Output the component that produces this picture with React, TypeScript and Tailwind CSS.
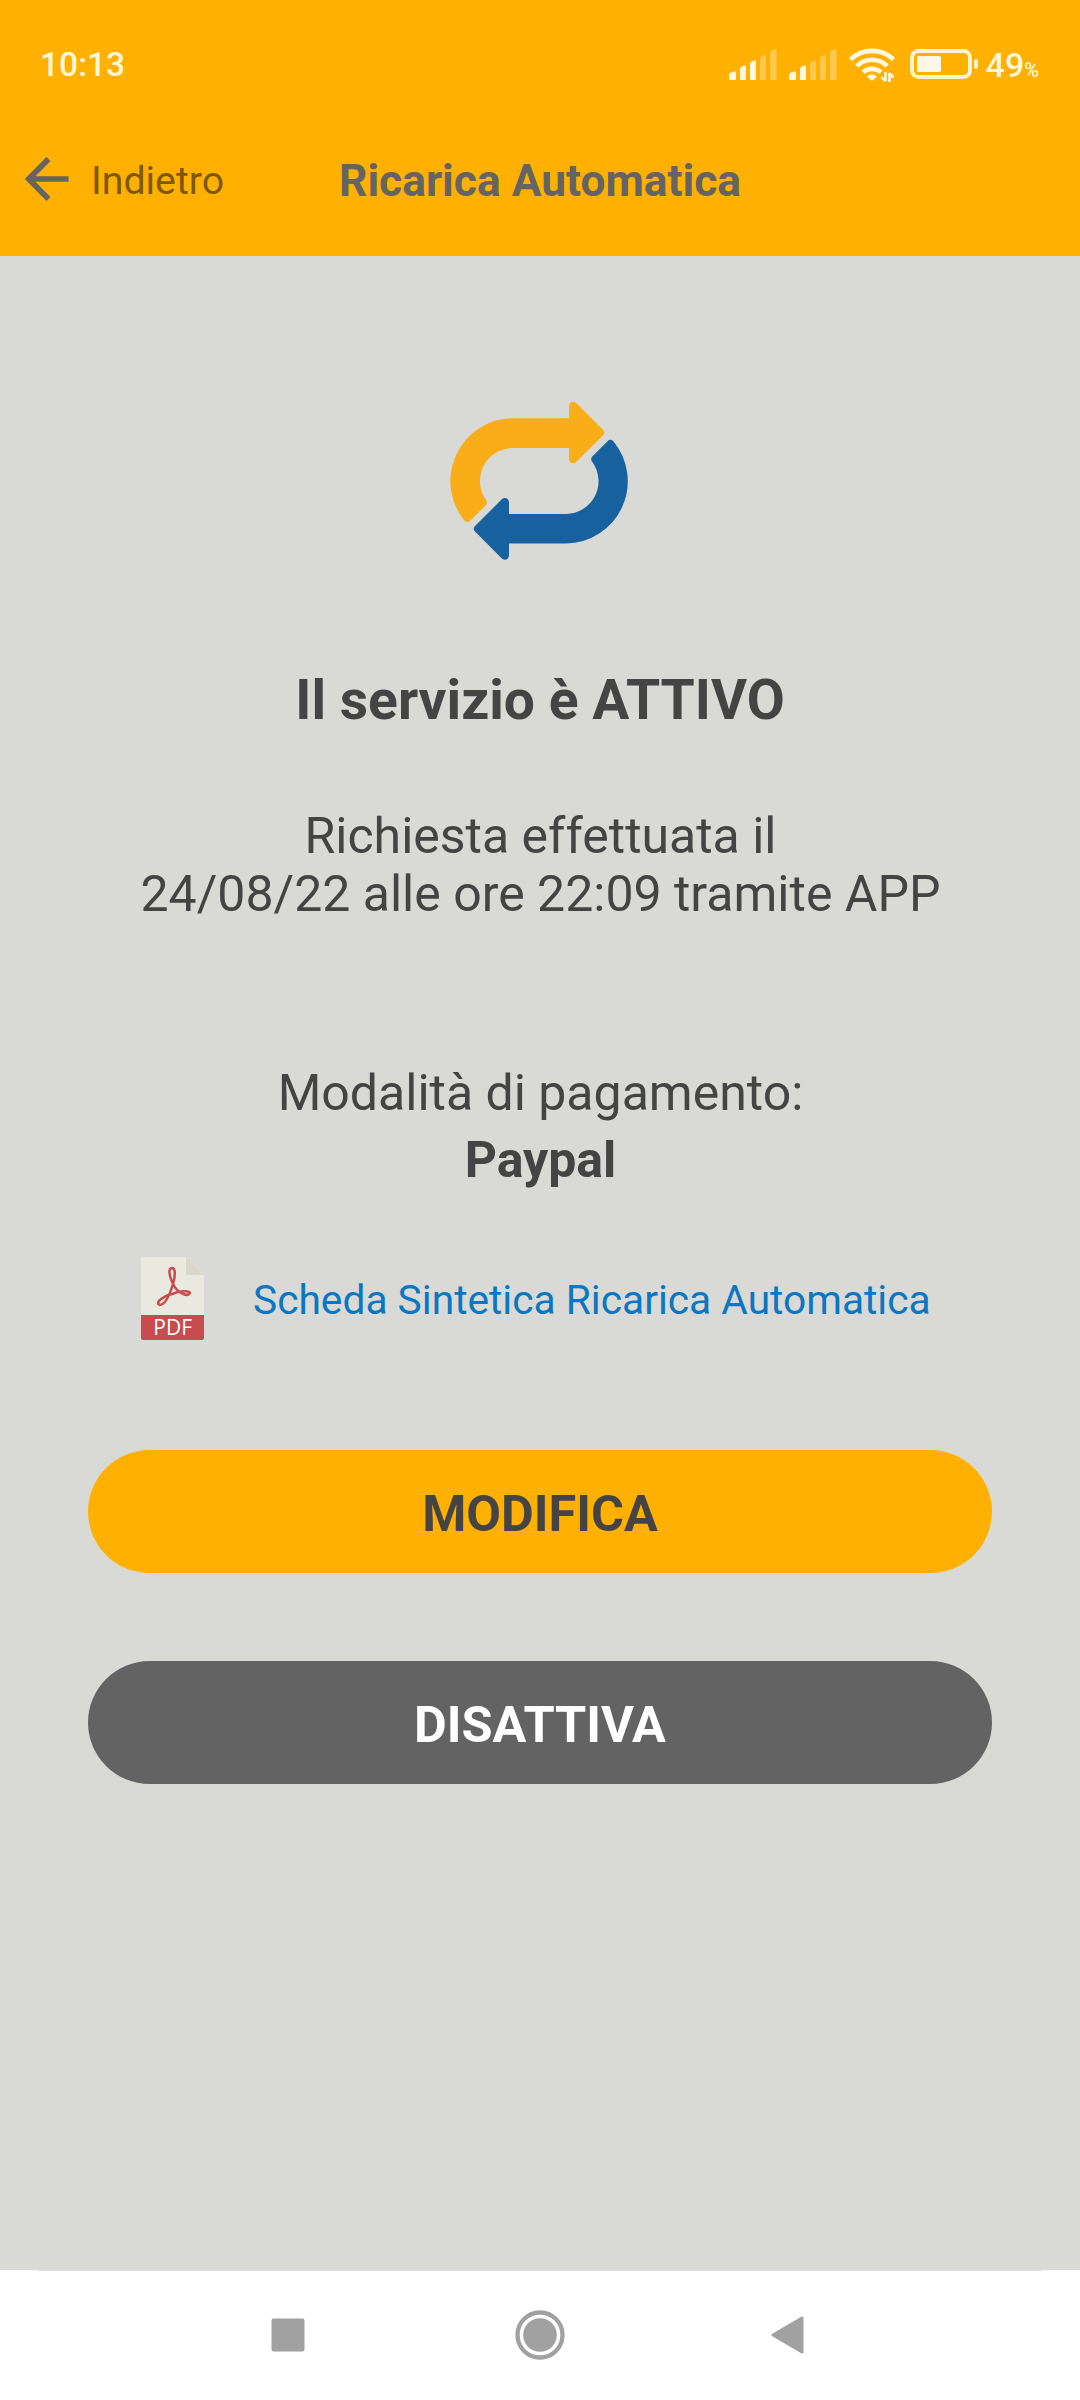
import type { ReactNode } from "react";

interface SignalBarsProps {
  level: number;
}

const bars = [
  "M0 30v-4q0-2 2-2.6l3-1q2-.6 2 1v6.6q0 1-1 1h-5q-1 0-1-1z",
  "M11 30v-10q0-2 2-2.6l2-.8q2-.6 2 1v12.400q0 1-1 1h-4q-1 0-1-1z",
  "M21 30v-15q0-2 2-2.800l2-.8q2-.6 2 1v17.600q0 1-1 1h-4q-1 0-1-1z",
  "M31 30v-20q0-2 2-3l2-1q2-.8 2 1v23q0 1-1 1h-4q-1 0-1-1z",
  "M41 30v-26q0-2 2-2.800l2.500-1q2-.6 2 1v28.800q0 1-1 1h-4.500q-1 0-1-1z",
];

const SignalBars = ({ level }: SignalBarsProps) => (
  <svg width="48" height="31" viewBox="0 0 48 31" fill="#fff7e0">
    {bars.map((d, index) => (
      <path key={index} d={d} opacity={index < level ? 1 : 0.35} />
    ))}
  </svg>
);

const WifiIcon = () => (
  <svg width="46" height="36" viewBox="0 0 46 36" fill="none" stroke="#fff7e0" strokeWidth="4.600">
    <path d="M1.500 12.500A31 31 0 0 1 44.500 12.500" />
    <path d="M7.800 19A22 22 0 0 1 38.200 19" />
    <path d="M14 25.300A13.500 13.500 0 0 1 32 25.300" />
    <path d="M18 29.500q5-4.500 10 0l-3.500 3.500q-1.500 1.200-3 0z" fill="#fff7e0" stroke="none" />
    <path d="M36.500 25v9.500M32.500 30l3.500 4M40.500 35v-9M40.500 26.500l4 4" strokeWidth="2.600" />
  </svg>
);

const BatteryIcon = () => (
  <svg width="68" height="30" viewBox="0 0 68 30">
    <rect x="2" y="2" width="58" height="26" rx="6.500" fill="none" stroke="#fff4d2" strokeWidth="4" />
    <rect x="7" y="7" width="24" height="16" rx="1.500" fill="#fff7e6" />
    <rect x="64" y="10" width="4" height="10" rx="2" fill="#fff4d2" />
  </svg>
);

const BackArrow = () => (
  <svg width="44" height="44" viewBox="0 0 44 44" fill="none" stroke="#646464" strokeWidth="5.600">
    <path d="M23.500 2L3.800 22L23.500 42M4 22H43.500" />
  </svg>
);

const RenewIcon = () => (
  <svg width="180" height="160" viewBox="0 0 180 160">
    <path
      fill="#f9ae18"
      d="M63 18.200H119V6.500C119 1.800 123.200 .5 126.200 3L153 29.800C154.800 31.700 154.800 33.300 153 35.200L126.200 62C123.200 64.500 119 63.200 119 58.500V48H63A33 33 0 0 0 36 100Q38 103 36 105L20.500 120.500Q17.500 123.500 14.300 120.400A62.800 62.800 0 0 1 63 18.200Z"
    />
    <path
      fill="#18619f"
      d="M116 143.500H59V155C59 159.700 54.800 161 51.800 158.500L25 131.500C23.200 129.600 23.200 128 25 126.100L51.800 99.200C54.800 96.800 59 98.200 59 102.500V114H116A32.800 32.800 0 0 0 142.300 62Q140 59 142.300 56.500L157.500 41.200Q160.500 38.500 163.300 41.300A62.300 62.300 0 0 1 116 143.500Z"
    />
  </svg>
);

const PdfIcon = () => (
  <svg width="63" height="83" viewBox="0 0 63 83">
    <path d="M2 0H45L63 18V58H0V2Q0 0 2 0Z" fill="#e9e9df" />
    <path d="M45 0L63 18H45Z" fill="#d9d8ca" />
    <path d="M0 58H63V81Q63 83 61 83H2Q0 83 0 81Z" fill="#c84b4d" />
    <path
      d="M32 27C28 19 27 11 31 11C35 11 34 20 32 27C29 37 24 48 18.500 48C13 45 25 38 31 37C38 34 48 33 49 36C47 40 37 37 32 27Z"
      fill="none"
      stroke="#c84b4d"
      strokeWidth="2.500"
      strokeLinejoin="round"
    />
    <text x="31.700" y="78.300" textAnchor="middle" fontSize="21" fill="#fff" className="font-['Open_Sans',sans-serif] font-medium">
      PDF
    </text>
  </svg>
);

interface ActionButtonProps {
  children: ReactNode;
  className: string;
}

const ActionButton = ({ children, className }: ActionButtonProps) => (
  <button className={`h-[123px] w-full rounded-full pt-1.5 text-[50.4px] font-bold leading-none ${className}`}>
    {children}
  </button>
);

const App = () => {
  return (
    <div className="flex h-[2400px] w-[1080px] flex-col bg-[#d9dad5] font-[Roboto,sans-serif] text-[#444444]">
      <header className="h-[256px] shrink-0 bg-[#ffb000]">
        {/* Status bar */}
        <div className="flex h-[104px] items-start pl-10 pr-[41px] text-[#fff7dc]">
          <span className="mt-[45px] text-[33.6px] font-medium leading-10">10:13</span>
          <div className="ml-auto flex items-start">
            <div className="mt-[49px]"><SignalBars level={3} /></div>
            <div className="ml-3 mt-[49px]"><SignalBars level={2} /></div>
            <div className="ml-3 mt-[47px]"><WifiIcon /></div>
            <div className="ml-[15px] mt-[49px]"><BatteryIcon /></div>
            <div className="ml-2 mt-[45px] flex items-baseline font-medium leading-10">
              <span className="text-[34px]">49</span>
              <span className="text-[20px]">%</span>
            </div>
          </div>
        </div>
        {/* Navigation bar */}
        <div className="grid grid-cols-[1fr_auto_1fr] items-start pl-[25px] pr-[25px]">
          <button className="flex items-start text-left text-[39.3px] leading-[48px] text-[#7f5806]">
            <span className="mt-[53px]"><BackArrow /></span>
            <span className="ml-[22px] mt-[53px]">Indietro</span>
          </button>
          <h1 className="mt-[51px] text-[44.3px] font-bold leading-[52px] text-[#646464]">Ricarica Automatica</h1>
        </div>
      </header>

      <main className="flex flex-1 flex-col items-center px-[88px] pt-[144px] text-center">
        <RenewIcon />
        <h2 className="mt-[108px] text-[55.2px] font-bold leading-[64px]">Il servizio è ATTIVO</h2>
        <p className="mt-[75px] whitespace-nowrap pl-px text-[50px] leading-[58px]">
          Richiesta effettuata il
          <br />
          24/08/22 alle ore 22:09 tramite APP
        </p>
        <div className="mt-[137px] pl-px text-[50px] leading-[67px]">
          <p>Modalità di pagamento:</p>
          <p className="font-bold">Paypal</p>
        </div>
        <a className="mt-[63px] flex items-center self-start pl-[53px] text-[40.7px] text-[#0b77c2]">
          <PdfIcon />
          <span className="ml-[49px] whitespace-nowrap pt-1">Scheda Sintetica Ricarica Automatica</span>
        </a>
        <div className="mt-[110px] flex w-full flex-col gap-[88px]">
          <ActionButton className="bg-[#ffb000] text-[#444444]">MODIFICA</ActionButton>
          <ActionButton className="bg-[#636363] text-white">DISATTIVA</ActionButton>
        </div>
      </main>

      {/* System navigation */}
      <nav className="h-[130px] shrink-0 bg-white">
        <div className="mx-[37px] h-px bg-[#e0e0e0]" />
        <div className="flex h-[128px] items-center pl-[271px]">
          <svg width="34" height="34" viewBox="0 0 34 34">
            <rect x=".5" y=".5" width="33" height="33" rx="2" fill="#a1a1a1" />
          </svg>
          <svg className="ml-[210px]" width="50" height="50" viewBox="0 0 50 50">
            <circle cx="25" cy="25" r="22.500" fill="none" stroke="#a1a1a1" strokeWidth="4.300" />
            <circle cx="25" cy="25" r="16.800" fill="#a1a1a1" />
          </svg>
          <svg className="ml-[206px]" width="33" height="38" viewBox="0 0 33 38">
            <path d="M2 19L31 2V36Z" fill="#a1a1a1" stroke="#a1a1a1" strokeWidth="3" strokeLinejoin="round" />
          </svg>
        </div>
      </nav>
    </div>
  );
};

export default App;
